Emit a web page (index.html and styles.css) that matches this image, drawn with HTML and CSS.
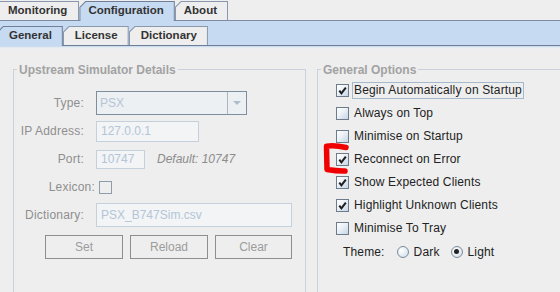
FILE: index.html
```html
<!DOCTYPE html>
<html lang="en">
<head>
<meta charset="utf-8">
<title>Configuration</title>
<link rel="stylesheet" href="styles.css">
</head>
<body>
<div class="app">
  <nav class="tabs tabs-main">
    <div class="tab first"><span>Monitoring</span></div>
    <div class="tab selected"><span>Configuration</span></div>
    <div class="tab"><span>About</span></div>
  </nav>
  <nav class="tabs tabs-sub">
    <div class="tab first selected"><span>General</span></div>
    <div class="tab"><span>License</span></div>
    <div class="tab"><span>Dictionary</span></div>
  </nav>
  <div class="stripe"></div>

  <div class="content">
    <section class="group group-left">
      <div class="group-title">Upstream Simulator Details</div>
      <div class="form">
        <div class="row">
          <span class="label">Type:</span>
          <div class="combo">
            <span class="combo-text">PSX</span>
            <span class="combo-btn"><span class="arrow"></span></span>
          </div>
        </div>
        <div class="row">
          <span class="label">IP Address:</span>
          <div class="field field-ip">127.0.0.1</div>
        </div>
        <div class="row">
          <span class="label">Port:</span>
          <div class="field field-port">10747</div>
          <span class="hint">Default: 10747</span>
        </div>
        <div class="row row-lex">
          <span class="label">Lexicon:</span>
          <span class="cb cb-disabled"></span>
        </div>
        <div class="row">
          <span class="label">Dictionary:</span>
          <div class="field field-dict">PSX_B747Sim.csv</div>
        </div>
        <div class="row buttons">
          <button class="btn" disabled>Set</button>
          <button class="btn" disabled>Reload</button>
          <button class="btn btn-last" disabled>Clear</button>
        </div>
      </div>
    </section>

    <section class="group group-right">
      <div class="group-title">General Options</div>
      <div class="options">
        <div class="opt"><span class="cb"><svg class="tick" width="9" height="9" viewBox="0 0 9 9"><path d="M1.3 4.6 L3.4 7.3 L7.8 1.6"/></svg></span><span class="opt-text focus">Begin Automatically on Startup</span></div>
        <div class="opt"><span class="cb"></span><span class="opt-text">Always on Top</span></div>
        <div class="opt"><span class="cb"></span><span class="opt-text">Minimise on Startup</span></div>
        <div class="opt"><span class="cb"><svg class="tick" width="9" height="9" viewBox="0 0 9 9"><path d="M1.3 4.6 L3.4 7.3 L7.8 1.6"/></svg></span><span class="opt-text">Reconnect on Error</span></div>
        <div class="opt"><span class="cb"><svg class="tick" width="9" height="9" viewBox="0 0 9 9"><path d="M1.3 4.6 L3.4 7.3 L7.8 1.6"/></svg></span><span class="opt-text">Show Expected Clients</span></div>
        <div class="opt"><span class="cb"><svg class="tick" width="9" height="9" viewBox="0 0 9 9"><path d="M1.3 4.6 L3.4 7.3 L7.8 1.6"/></svg></span><span class="opt-text">Highlight Unknown Clients</span></div>
        <div class="opt"><span class="cb"></span><span class="opt-text">Minimise To Tray</span></div>
        <div class="opt theme">
          <span class="theme-label">Theme:</span>
          <span class="radio"></span><span class="radio-text">Dark</span>
          <span class="radio on"></span><span class="radio-text">Light</span>
        </div>
      </div>
    </section>
  </div>

  <svg class="annotation" width="36" height="40" viewBox="0 0 36 40">
    <path d="M28 7.5 C21 6, 14 5.5, 8.5 6.2 L9 29.5 C15 30.5, 21 31.2, 27 31"/>
  </svg>
</div>
</body>
</html>
```
FILE: styles.css
```css
* { box-sizing: border-box; }
html, body { margin: 0; padding: 0; }
body {
  background: #eeeeee;
  font-family: "Liberation Sans", Arial, sans-serif;
  font-size: 12px;
}
.app {
  position: relative;
  width: 560px;
  height: 292px;
  overflow: hidden;
  background: #eeeeee;
}

/* ---------- tabs ---------- */
.tabs { display: flex; align-items: flex-start; }
.tabs-main {
  height: 21px;
  border-bottom: 1px solid #7d8ba3;
  background: #eeeeee;
}
.tabs-sub {
  height: 25px;
  padding-top: 5px;
  background: #c6daf2;
  border-bottom: 1px solid #6e7e98;
}
.tab {
  height: 19px;
  padding: 1px 1px 0;
  background: #8a98ad;
  clip-path: polygon(0 6px, 6px 0, 100% 0, 100% 100%, 0 100%);
}
.tabs-main .tab { margin-top: 1px; }
.tab span {
  display: block;
  height: 18px;
  line-height: 17px;
  padding: 0 10px 0 8px;
  background: #eeeeee;
  clip-path: polygon(0 5.5px, 5.5px 0, 100% 0, 100% 100%, 0 100%);
  font-weight: bold;
  font-size: 11.5px;
  color: #333333;
  white-space: nowrap;
}
.tabs-sub .tab span { padding: 0 10px 0 11px; }
.tab.selected {
  position: relative;
  z-index: 1;
  height: 20px;
  background: #6f7f99;
}
.tab.selected span { height: 19px; background: #c6daf2; }
.tabs-main .tab.first { margin-left: -7px; }
.tabs-main .tab.first span { padding-left: 14px; padding-right: 11px; }
.tabs-sub .tab.first { margin-left: -3px; }

.stripe {
  height: 3px;
  background: linear-gradient(#cddbea 0, #cddbea 1px, #e2eaf2 1px, #e2eaf2 2px, #ebeef1 2px);
}

/* ---------- groups ---------- */
.content {
  display: flex;
  gap: 11px;
  padding: 20px 0 0 13px;
}
.group {
  flex: none;
  height: 250px;
  border: 1px solid #c9d1db;
}
.group-left { width: 293px; }
.group-right { width: 300px; }
.group-title {
  width: max-content;
  margin: -7px 0 0 3px;
  padding: 0 2px;
  background: #eeeeee;
  line-height: 14px;
  font-weight: bold;
  color: #a2a2a2;
}

/* ---------- left form ---------- */
.form { padding-top: 12px; display: flex; flex-direction: column; }
.row {
  height: 28px;
  display: flex;
  align-items: center;
  gap: 12px;
}
.label {
  width: 70px;
  text-align: right;
  color: #8e8e8e;
  letter-spacing: 0.2px;
}
.row-lex { gap: 4px; }
.row-lex .label { width: 81px; }

.combo {
  width: 151px;
  height: 24px;
  display: flex;
  border: 1px solid #7f8e9f;
  background: #edf0f3;
}
.combo-text {
  flex: 1;
  padding-left: 3px;
  line-height: 22px;
  color: #b4c5d7;
}
.combo-btn {
  width: 19px;
  border-left: 1px solid #aab6c3;
  display: flex;
  align-items: center;
  justify-content: center;
}
.arrow {
  width: 0;
  height: 0;
  border-left: 4px solid transparent;
  border-right: 4px solid transparent;
  border-top: 4px solid #aebdcc;
}
.field {
  height: 21px;
  padding: 0 4px;
  line-height: 19px;
  border: 1px solid #c4d0dc;
  background: #f2f4f6;
  color: #b4c5d7;
  white-space: nowrap;
}
.field-ip { width: 103px; }
.field-port { width: 49px; height: 19px; line-height: 17px; }
.field-dict { width: 196px; height: 24px; line-height: 22px; }
.hint { font-style: italic; color: #8c8c8c; }

.buttons { margin-top: 4px; padding-left: 31px; gap: 7px; }
.btn {
  width: 78px;
  height: 24px;
  padding: 0;
  border: 1px solid #8e8e8e;
  border-radius: 0;
  background: #eeeeee;
  color: #9c9c9c;
  font: 12px "Liberation Sans", Arial, sans-serif;
}
.btn-last { width: 77px; }

/* ---------- right options ---------- */
.options {
  margin-top: 2px;
  padding-left: 18px;
  display: flex;
  flex-direction: column;
}
.opt {
  height: 23px;
  display: flex;
  align-items: center;
  gap: 3px;
  color: #222222;
  letter-spacing: 0.15px;
}
.cb {
  flex: none;
  width: 13px;
  height: 13px;
  display: flex;
  align-items: center;
  justify-content: center;
  border: 1px solid #6d7b8b;
  background: linear-gradient(135deg, #ffffff 0%, #eef3f8 40%, #c6d5e5 100%);
}
.cb-disabled {
  border-color: #8f9cab;
  background: #eeeeee;
}
.tick path {
  fill: none;
  stroke: #1e1e1e;
  stroke-width: 2;
}
.opt-text {
  border: 1px solid transparent;
  padding: 0 1px;
  line-height: 15px;
  white-space: nowrap;
}
.opt-text.focus { border-color: #a5b9cd; }

.theme { gap: 0; padding-left: 7px; }
.theme-label { margin-right: 12px; }
.radio {
  flex: none;
  width: 12px;
  height: 12px;
  margin-right: 5px;
  border: 1px solid #7d8b9b;
  border-radius: 50%;
  background: radial-gradient(circle at 35% 35%, #ffffff 0%, #e6edf4 50%, #c8d6e4 100%);
  display: flex;
  align-items: center;
  justify-content: center;
}
.radio.on::after {
  content: "";
  width: 5px;
  height: 5px;
  border-radius: 50%;
  background: #222222;
}
.radio-text { margin-right: 11px; }

/* ---------- red annotation ---------- */
.annotation {
  position: absolute;
  left: 318px;
  top: 140px;
}
.annotation path {
  fill: none;
  stroke: #f00000;
  stroke-width: 5.5;
  stroke-linecap: round;
  stroke-linejoin: round;
}
```
